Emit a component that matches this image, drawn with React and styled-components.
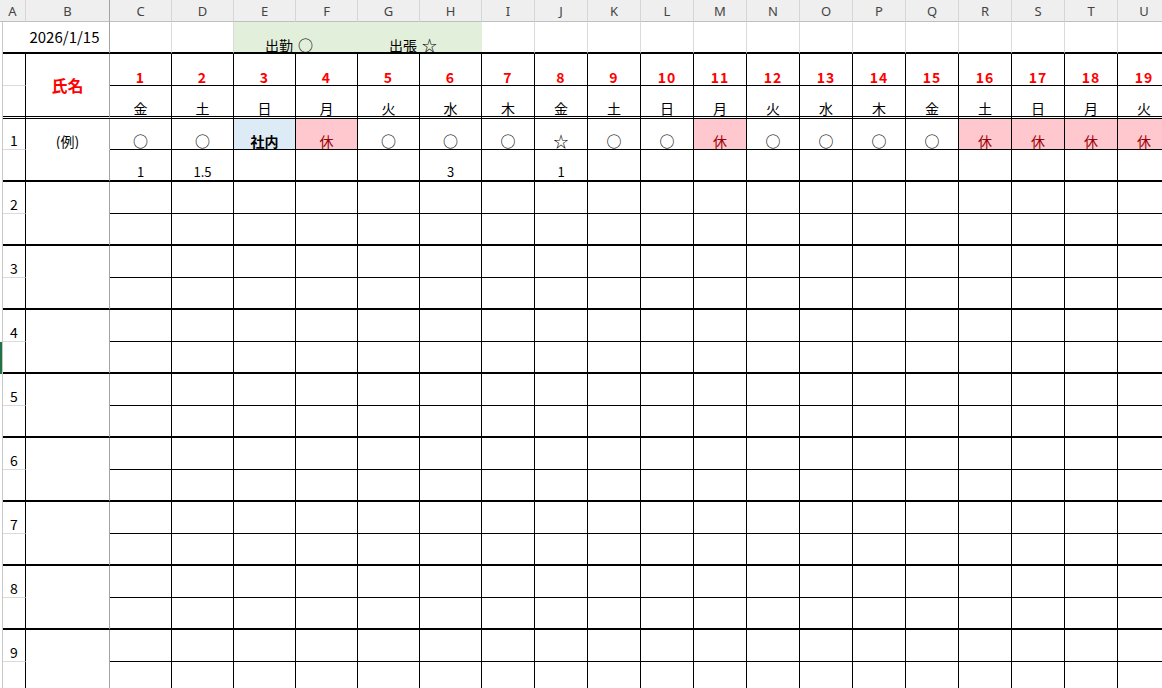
import React from 'react';
import styled, { createGlobalStyle, css } from 'styled-components';

const GlobalStyle = createGlobalStyle`
  html, body { margin: 0; padding: 0; background: #fff; }
  body {
    font-family: "Noto Sans CJK JP", "Noto Sans", sans-serif;
    overflow: hidden;
  }
`;

const EDGE = {
  none: 'none',
  grid: '1px solid #dadada',
  freeze: '1px solid #a3a3a3',
  thin: '1px solid #000',
  double: '3px double #000',
  thick: '2px solid #000',
  clear: '1px solid transparent',
};

const LETTERS = ['C', 'D', 'E', 'F', 'G', 'H', 'I', 'J', 'K', 'L', 'M', 'N', 'O', 'P', 'Q', 'R', 'S', 'T', 'U'];

const DAYS = [
  [1, '金'], [2, '土'], [3, '日'], [4, '月'], [5, '火'], [6, '水'], [7, '木'], [8, '金'], [9, '土'], [10, '日'],
  [11, '月'], [12, '火'], [13, '水'], [14, '木'], [15, '金'], [16, '土'], [17, '日'], [18, '月'], [19, '火'],
];

const EXAMPLE = [
  ['○'], ['○'], ['社内', 'office'], ['休', 'off'], ['○'], ['○'], ['○'], ['☆'], ['○'], ['○'],
  ['休', 'off'], ['○'], ['○'], ['○'], ['○'], ['休', 'off'], ['休', 'off'], ['休', 'off'], ['休', 'off'],
];

const HOURS = { 0: '1', 1: '1.5', 5: '3', 7: '1' };

const GROUPS = [2, 3, 4, 5, 6, 7, 8, 9];

const Viewport = styled.div`
  width: 1162px;
  height: 688px;
  overflow: hidden;
  position: relative;
`;

const Sheet = styled.div`
  display: grid;
  grid-template-columns: 3px 23px 84px repeat(6, 62px) repeat(13, 53px);
  grid-template-rows: 22px 32px 32px 33px 31px 32px repeat(16, 32px);
  width: 1171px;
`;

const cellBase = css`
  box-sizing: border-box;
  display: flex;
  justify-content: center;
  align-items: flex-end;
  padding-bottom: 1px;
  white-space: nowrap;
  overflow: hidden;
  font-size: 14px;
  line-height: 14px;
  color: #000;
  background: #fff;
`;

const ColumnHeader = styled.div`
  box-sizing: border-box;
  display: flex;
  align-items: center;
  justify-content: center;
  grid-column: span ${p => p.$span || 1};
  background: #efefef;
  border-bottom: 1px solid #bfbfbf;
  border-right: 1px solid ${p => (p.$freeze ? '#a3a3a3' : '#d6d6d6')};
  font-family: "Noto Sans", "Liberation Sans", sans-serif;
  font-size: 13px;
  color: #444;
  padding-top: 1px;
`;

const Strip = styled.div`
  box-sizing: border-box;
  border-right: 1px solid #c8c8c8;
  background: ${p => (p.$selected ? '#217346' : '#fff')};
`;

const IndexCell = styled.div`
  ${cellBase};
  border-right: ${p => EDGE[p.$right || 'thin']};
  border-bottom: ${p => EDGE[p.$bottom || 'grid']};
  padding-bottom: 2px;
`;

const NameCell = styled.div`
  ${cellBase};
  grid-row: span ${p => p.$rows || 1};
  border-right: ${EDGE.freeze};
  border-bottom: ${p => EDGE[p.$bottom || 'thick']};
  ${p => p.$center && css`align-items: center; padding-bottom: 0;`}
`;

const DateText = styled.span`
  font-size: 15px;
  line-height: 16px;
  padding-right: 6px;
`;

const NameTitle = styled.span`
  color: #ff0000;
  font-weight: 700;
  font-size: 16px;
  line-height: 18px;
`;

const BlankCell = styled.div`
  ${cellBase};
  border-right: ${p => EDGE[p.$right || 'grid']};
  border-bottom: ${EDGE.thick};
`;

const BannerCell = styled.div`
  ${cellBase};
  grid-column: span 2;
  background: #e2efda;
  border-bottom: ${EDGE.thick};
  padding-bottom: 0;
  padding-right: 14px;
  gap: 5px;
`;

const BannerMark = styled.span`
  font-size: 15px;
`;

const TONES = {
  plain: css``,
  office: css`background: #ddebf7; font-weight: 700;`,
  off: css`background: #ffc7ce; color: #9c0006;`,
};

const DayCell = styled.div`
  ${cellBase};
  border-right: ${EDGE.thin};
  border-bottom: ${p => EDGE[p.$bottom || 'thin']};
  ${p => TONES[p.$tone || 'plain']};
`;

const Mark = styled.span`
  font-size: 15px;
`;

const DayNumber = styled.span`
  color: #ff0000;
  font-weight: 700;
  font-size: 14px;
  letter-spacing: 1px;
`;

const Hours = styled.span`
  font-size: 13px;
`;

function HeaderRow() {
  return (
    <>
      <ColumnHeader $span={2}>A</ColumnHeader>
      <ColumnHeader $freeze>B</ColumnHeader>
      {LETTERS.map(l => (
        <ColumnHeader key={l}>{l}</ColumnHeader>
      ))}
    </>
  );
}

function DateRow() {
  return (
    <>
      <Strip />
      <IndexCell $right="none" $bottom="thick" />
      <NameCell $bottom="thick" $center>
        <DateText>2026/1/15</DateText>
      </NameCell>
      <BlankCell />
      <BlankCell />
      <BannerCell>
        <span>出勤</span>
        <BannerMark>○</BannerMark>
      </BannerCell>
      <BannerCell>
        <span>出張</span>
        <BannerMark>☆</BannerMark>
      </BannerCell>
      {LETTERS.slice(6).map(l => (
        <BlankCell key={l} />
      ))}
    </>
  );
}

function CalendarHead() {
  return (
    <>
      <Strip />
      <IndexCell $bottom="grid" />
      <NameCell $rows={2} $bottom="double" $center>
        <NameTitle>氏名</NameTitle>
      </NameCell>
      {DAYS.map(([n]) => (
        <DayCell key={`n${n}`}>
          <DayNumber>{n}</DayNumber>
        </DayCell>
      ))}
      <Strip />
      <IndexCell $bottom="double" />
      {DAYS.map(([n, w]) => (
        <DayCell key={`w${n}`} $bottom="double">
          {w}
        </DayCell>
      ))}
    </>
  );
}

function ExampleRows() {
  return (
    <>
      <Strip />
      <IndexCell>1</IndexCell>
      <NameCell $bottom="clear">(例)</NameCell>
      {EXAMPLE.map(([t, tone], i) => (
        <DayCell key={`e${i}`} $tone={tone}>
          {tone ? t : <Mark>{t}</Mark>}
        </DayCell>
      ))}
      <Strip />
      <IndexCell $bottom="thick" />
      <NameCell $bottom="thick" />
      {LETTERS.map((l, i) => (
        <DayCell key={`h${l}`} $bottom="thick">
          {HOURS[i] && <Hours>{HOURS[i]}</Hours>}
        </DayCell>
      ))}
    </>
  );
}

function PersonRows({ no }) {
  return (
    <>
      <Strip />
      <IndexCell>{no}</IndexCell>
      <NameCell $rows={2} $bottom="thick" />
      {LETTERS.map(l => (
        <DayCell key={`a${l}`} />
      ))}
      <Strip $selected={no === 4} />
      <IndexCell $bottom="thick" />
      {LETTERS.map(l => (
        <DayCell key={`b${l}`} $bottom="thick" />
      ))}
    </>
  );
}

export default function App() {
  return (
    <Viewport>
      <GlobalStyle />
      <Sheet>
        <HeaderRow />
        <DateRow />
        <CalendarHead />
        <ExampleRows />
        {GROUPS.map(no => (
          <PersonRows key={no} no={no} />
        ))}
      </Sheet>
    </Viewport>
  );
}
